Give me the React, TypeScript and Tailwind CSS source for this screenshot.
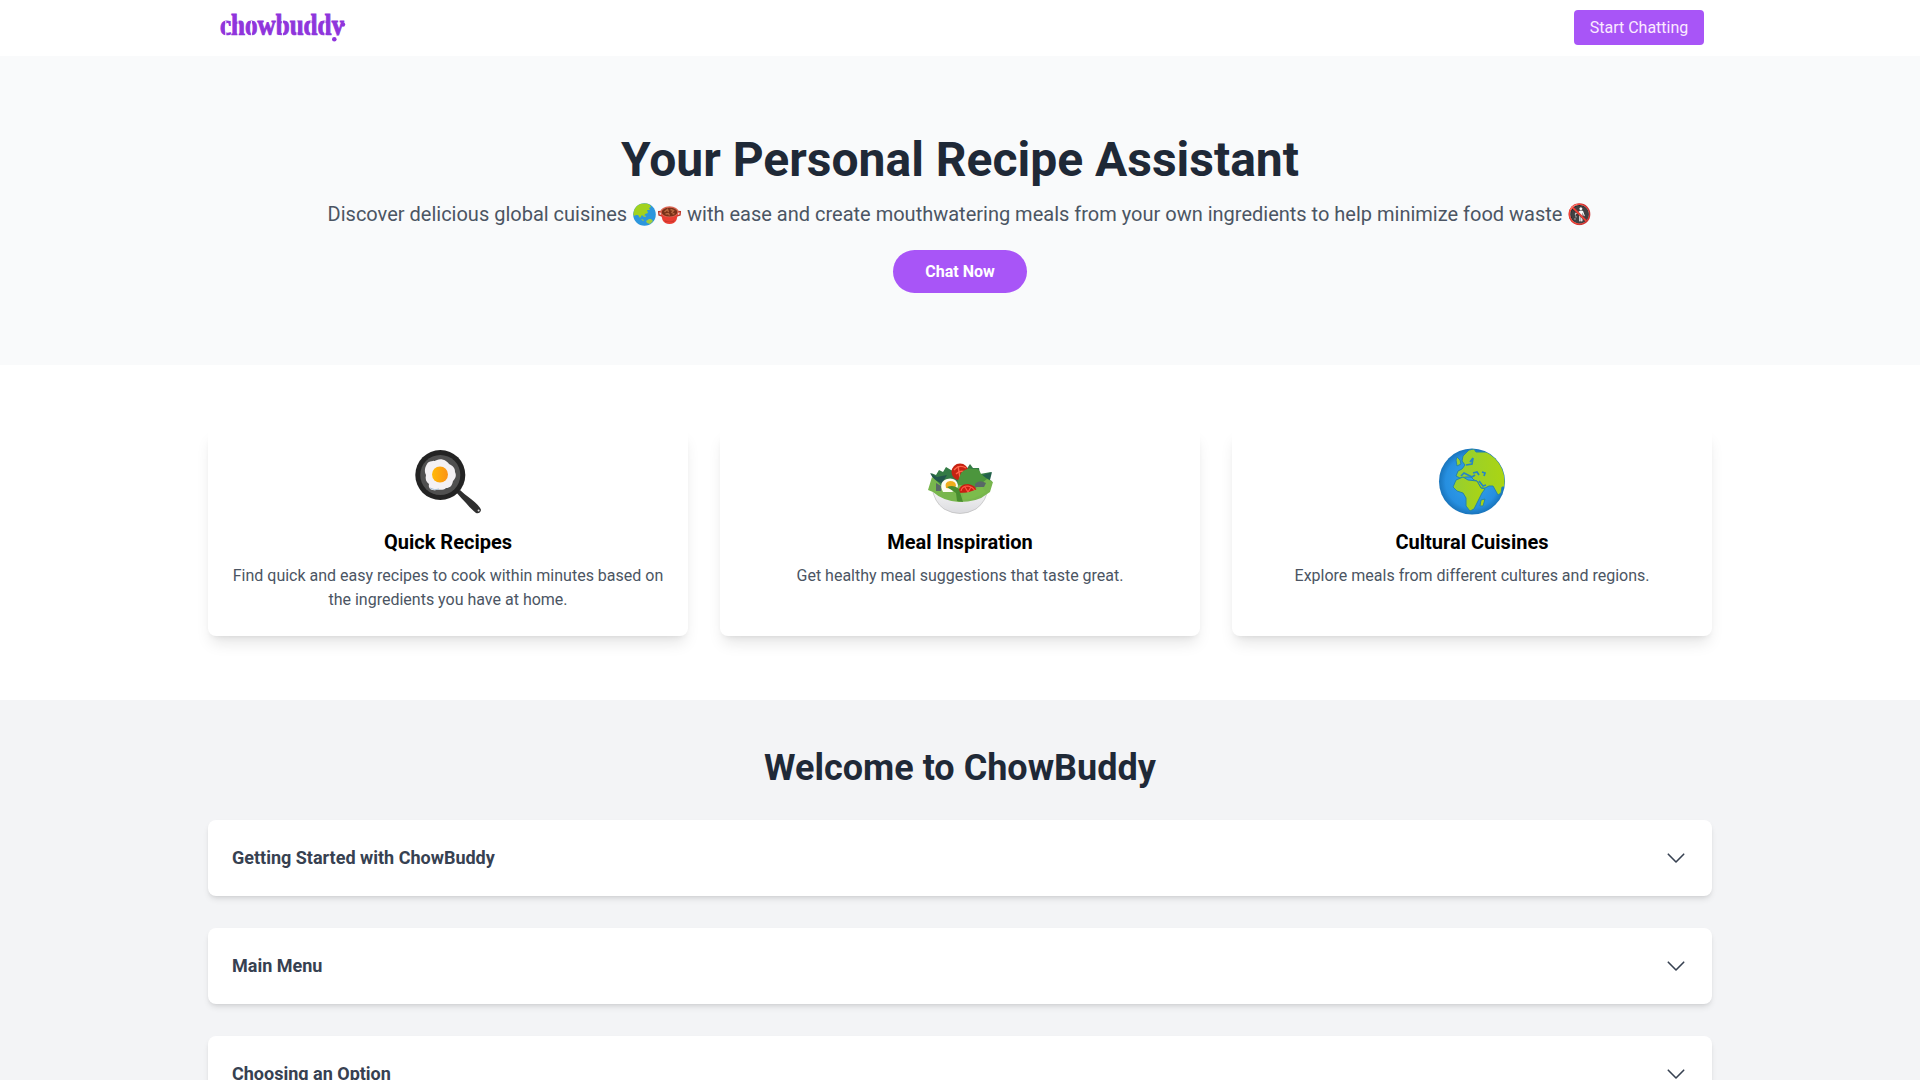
import React from "react";

function PanIcon() {
  return (
    <svg viewBox="-2 0 100 100" className="h-[100px] w-[100px]">
      <defs>
        <linearGradient id="yolk" x1="0" x2="1"><stop offset="0" stopColor="#ffb908" /><stop offset="1" stopColor="#fb9217" /></linearGradient>
      </defs>
      <path d="M56 62L60 60Q64 64 71 69Q80 76 81 80Q80 84 76 83Q70 78 66 73Q61 68 56 62Z" fill="#2f2f2f" />
      <circle cx="78.6" cy="80.5" r="1" fill="#ddd" />
      <circle cx="40.3" cy="45" r="25" fill="#232323" />
      <circle cx="40.3" cy="45" r="20" fill="#505050" />
      <path d="M27 34C29 30 34 32 37 30C42 28 47 31 49 34C53 36 55 38 55 42C57 46 55 49 53 51C52 56 50 58 46 58C43 61 39 59 36 60C31 61 28 58 29 54C26 52 25 49 26 45C24 41 25 37 27 34Z" fill="#f4f1f4" />
      <path d="M30 58Q35 61 39 59" stroke="#a8bfd3" fill="none" />
      <circle cx="40" cy="44.5" r="8" fill="url(#yolk)" />
    </svg>
  );
}

function SaladIcon() {
  return (
    <svg viewBox="0 0 100 100" className="h-[100px] w-[100px]">
      <defs>
        <linearGradient id="bowl" x1="0" x2="0" y1="0" y2="1"><stop offset="0" stopColor="#f7f7f7" /><stop offset="1" stopColor="#dcdce0" /></linearGradient>
      </defs>
      <path d="M22 57Q24 72 34 79Q50 88 66 79Q77 71 78 57Z" fill="url(#bowl)" stroke="#bbb" strokeWidth=".7" />
      <path d="M21 43L26 45L29 40L33 42L36 37L41 40L46 42L56 40L60 34L63 38L69 38L70 44L81 42L79 48L73 55L28 57Z" fill="#347b45" />
      <path d="M20 43L27 47L37 45L32 53L24 50Z" fill="#22564b" />
      <path d="M71 46L82 42L80 50L74 53Z" fill="#23614c" />
      <circle cx="50" cy="42" r="8.5" fill="#c62312" />
      <path d="M44 40Q49 34 56 38M46 44Q50 40 55 42M48 36L50 48" stroke="#ff654b" strokeWidth="1.4" fill="none" />
      <path d="M47 53L51 43Q57 37 63 39Q69 38 71 44L76 48L82 51L79 59L71 63L49 57Z" fill="#4c963d" />
      <path d="M18 60L22 47L29 53L33 58L51 55L63 60L77 49L83 52L80 62L77 64Q68 72 49 72Q33 71 23 62Z" fill="#78b64d" />
      <path d="M26 53L31 56L31 61L26 61ZM65 54Q69 49 76 53L74 57L65 57Z" fill="#586866" />
      <path d="M33 62Q28 52 37 49Q46 47 48 55Q48 60 42 62Z" fill="#fcfbf0" />
      <path d="M36 58Q34 52 40 51Q46 51 46 56L43 59Z" fill="#efae1d" />
      <path d="M48 63Q49 54 58 54Q66 55 67 62Z" fill="#c91e11" />
      <path d="M51 61Q52 56 58 56Q63 57 65 61M55 57L58 62L61 57" stroke="#ff5948" strokeWidth="1.2" fill="none" />
      <path d="M37 57Q44 54 49 59L53 72L47 71L46 63Z" fill="#498d2f" />
      <path d="M53 64L65 60L72 57L76 62Q66 69 53 70Z" fill="#7cbc4c" />
    </svg>
  );
}

function GlobeIcon() {
  return (
    <svg viewBox="2 0 100 100" className="h-[100px] w-[100px]">
      <defs>
        <radialGradient id="ocean"><stop offset="0" stopColor="#35a4ed" /><stop offset=".8" stopColor="#268fe0" /><stop offset="1" stopColor="#1974bb" /></radialGradient>
        <linearGradient id="land" x1="0" x2="1"><stop offset="0" stopColor="#94ce33" /><stop offset="1" stopColor="#acd511" /></linearGradient>
        <clipPath id="globe"><circle cx="52" cy="51.5" r="32.5" /></clipPath>
      </defs>
      <circle cx="52" cy="51.5" r="33" fill="url(#ocean)" />
      <g clipPath="url(#globe)" fill="url(#land)" stroke="#2684a9" strokeWidth="1">
        <path d="M45 35L42 31L43 26L49 20L54 19L56 22L70 22L87 41L87 57L82 57L81 63L78 65L73 56L69 56L65 58L61 58L57 51L54 50L51 47L46 47L40 48L36 46L38 41L42 39Z" />
        <path d="M36 50L43 47L48 50L57 51L61 58L65 59L62 63L59 69L54 79L50 81L46 76L46 68L43 63L37 61L33 57Z" />
        <path d="M37 27L40 30L41 34L37 36L36 30ZM61 70L65 69L63 76L60 76Z" />
      </g>
      <path d="M41 46L44 43L48 45L52 47L55 45M53 43L57 42L59 45M62 42L65 43L64 46M50 32L53 28L52 34L46 35M59 51L63 56L66 55" fill="none" stroke="#2684c5" strokeWidth="1.7" />
    </svg>
  );
}

function PotIcon() {
  return (
    <svg viewBox="-.5 0 25 25" className="inline-block h-[25px] w-[25px] align-[-6px]">
      <path d="M4 9.5L1.2 9.7L1.5 13L5 14M20 9.5L22.8 9.7L22.5 13L19 14" fill="none" stroke="#bd3527" strokeWidth="1.4" />
      <path d="M3 10L5 18Q7 22 12 22Q17 22 19 18L21 10Z" fill="#e83d32" />
      <path d="M7 18Q12 21 17 18L16 20H8Z" fill="#c9342b" />
      <ellipse cx="12" cy="9.8" rx="9.2" ry="5.5" fill="#dc6653" />
      <ellipse cx="12" cy="10.1" rx="7.9" ry="4.4" fill="#783018" />
      <path d="M7 10L10 7.5L11 10M13 7.5L16 8.5L14 11M8 12L11 11.5L12 13.5M15 12L17 11.5" stroke="#b9663f" strokeWidth="1.4" fill="none" />
    </svg>
  );
}

function AsiaIcon() {
  return (
    <svg viewBox="0 0 25 25" className="inline-block h-[25px] w-[25px] align-[-6px]">
      <circle cx="12.5" cy="12.5" r="11.3" fill="#2c96dd" />
      <path d="M1.3 12Q2 4 9 1.8L15 1.6L18 3L19 5L17 6L18 8L15 8L16 11L13 12L12 15L10 13L8 16L6 13L4 13L2 14Z" fill="#a1d21e" />
      <path d="M14 19L17 17L19 17L21 19L18 22L15 21ZM9 17L12 18L11 19ZM13 13L14 15L12 15Z" fill="#a3cd39" />
    </svg>
  );
}

function Logo() {
  return (
    <svg viewBox="0 0 130 36" className="h-9 w-[130px]" role="img" aria-label="chowbuddy">
      <defs>
        <clipPath id="wordmark"><rect width="130" height="23.4" /></clipPath>
      </defs>
      <g clipPath="url(#wordmark)">
        <text x="3" y="23" textLength="124" lengthAdjust="spacingAndGlyphs" fontFamily="Liberation Serif, serif" fontWeight="700" fontSize="29" fill="#8f35dc" stroke="#8f35dc" strokeWidth=".9">chowbuddy</text>
      </g>
      <path d="M8.8 9V24M21 9V24M34.4 9V24M65.4 8V24M80 9V24M94 9V24M108 9V24" stroke="white" strokeWidth="1" />
      <circle cx="126" cy="12.5" r="2.2" fill="#8f35dc" />
      <circle cx="117.3" cy="27.3" r="2.3" fill="#8f35dc" />
    </svg>
  );
}

const features = [
  { icon: <PanIcon />, title: "Quick Recipes", text: "Find quick and easy recipes to cook within minutes based on the ingredients you have at home." },
  { icon: <SaladIcon />, title: "Meal Inspiration", text: "Get healthy meal suggestions that taste great." },
  { icon: <GlobeIcon />, title: "Cultural Cuisines", text: "Explore meals from different cultures and regions." },
];
const topics = ["Getting Started with ChowBuddy", "Main Menu", "Choosing an Option"];

export default function App() {
  return (
    <div className="h-[1080px] overflow-hidden bg-white font-['Roboto',sans-serif]">
      <header className="flex h-14 items-center justify-between bg-white pl-[217px] pr-[216px]">
        <div className="pt-1"><Logo /></div>
        <button className="mb-px h-[35px] w-[130px] rounded-sm bg-[#a855f7] text-base text-[#fbeaff]">Start Chatting</button>
      </header>
      <section className="flex h-[309px] flex-col items-center bg-[#f9fafb] pt-[72px]">
        <h1 className="text-5xl font-bold leading-[64px] text-[#1f2937]">Your Personal Recipe Assistant</h1>
        <p className="mt-2 h-7 whitespace-nowrap text-xl leading-7 text-[#4b5563]">Discover delicious global cuisines <AsiaIcon /><PotIcon /> with ease and create mouthwatering meals from your own ingredients to help minimize food waste 🚯</p>
        <button className="mt-[22px] h-[43px] w-[134px] rounded-full bg-[#a855f7] font-bold text-white">Chat Now</button>
      </section>
      <section className="grid h-[335px] grid-cols-3 gap-8 bg-white px-52 py-16">
        {features.map((f) => (
          <div key={f.title} className="rounded-lg px-6 text-center shadow-lg">
            <div className="flex h-[99px] justify-center pt-px">{f.icon}</div>
            <h2 className="text-xl font-bold leading-7">{f.title}</h2>
            <p className="mt-2 text-[#4b5563]">{f.text}</p>
          </div>
        ))}
      </section>
      <section className="bg-[#f3f4f6] px-52 pt-12">
        <h2 className="text-center text-4xl font-bold text-[#1f2937]">Welcome to ChowBuddy</h2>
        {topics.map((t) => (
          <div key={t} className="mt-8 flex items-center justify-between rounded-lg bg-white p-6 text-lg font-bold text-[#374151] shadow-md">
            {t}
            <svg viewBox="0 0 24 24" className="h-6 w-6" fill="none" stroke="#374151" strokeWidth="1.6" strokeLinecap="round" strokeLinejoin="round"><path d="M4.3 8.2L12 16L19.7 8.2" /></svg>
          </div>
        ))}
      </section>
    </div>
  );
}
